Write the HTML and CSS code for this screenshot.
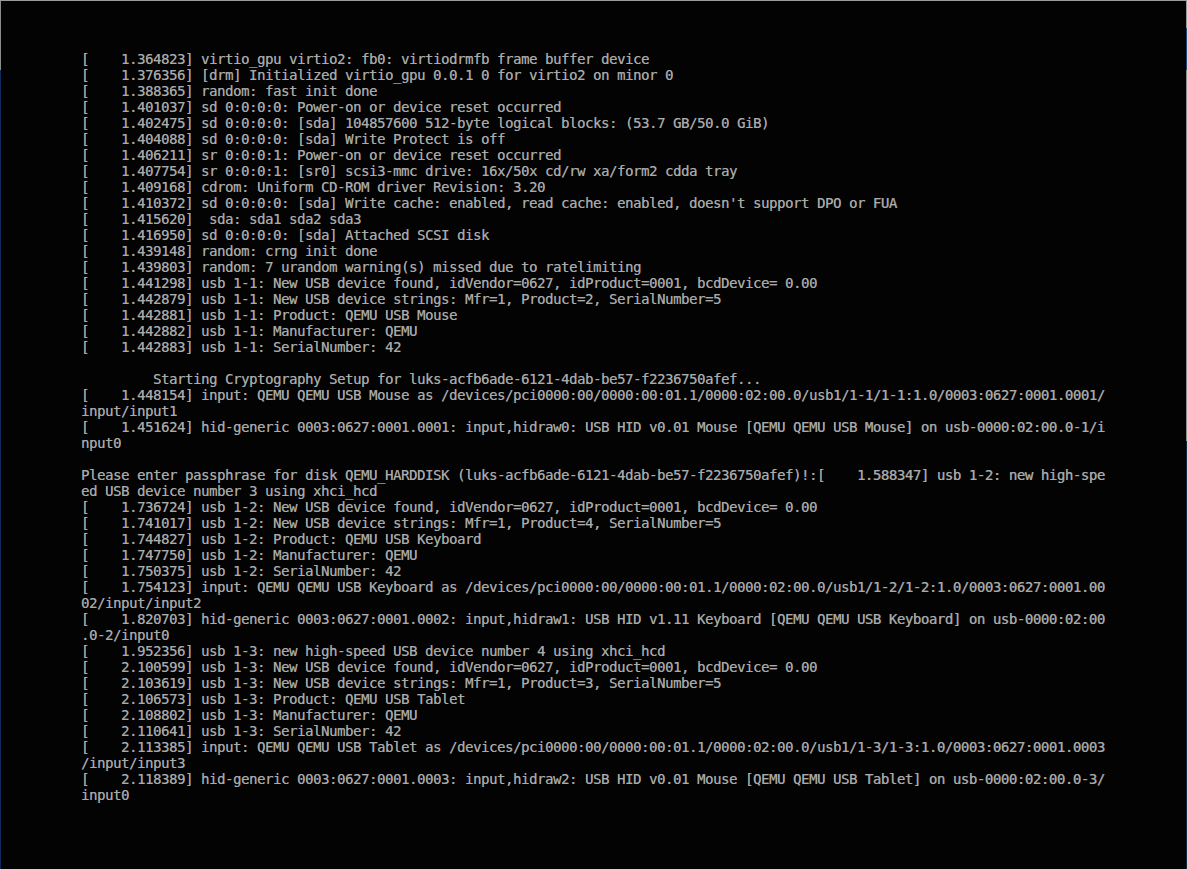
FILE: index.html
```html
<!DOCTYPE html>
<html lang="en">
<head>
<meta charset="utf-8">
<title>Console</title>
<link rel="stylesheet" href="styles.css">
</head>
<body>
<main class="screen">
<pre class="console">[    1.364823] virtio_gpu virtio2: fb0: virtiodrmfb frame buffer device
[    1.376356] [drm] Initialized virtio_gpu 0.0.1 0 for virtio2 on minor 0
[    1.388365] random: fast init done
[    1.401037] sd 0:0:0:0: Power-on or device reset occurred
[    1.402475] sd 0:0:0:0: [sda] 104857600 512-byte logical blocks: (53.7 GB/50.0 GiB)
[    1.404088] sd 0:0:0:0: [sda] Write Protect is off
[    1.406211] sr 0:0:0:1: Power-on or device reset occurred
[    1.407754] sr 0:0:0:1: [sr0] scsi3-mmc drive: 16x/50x cd/rw xa/form2 cdda tray
[    1.409168] cdrom: Uniform CD-ROM driver Revision: 3.20
[    1.410372] sd 0:0:0:0: [sda] Write cache: enabled, read cache: enabled, doesn't support DPO or FUA
[    1.415620]  sda: sda1 sda2 sda3
[    1.416950] sd 0:0:0:0: [sda] Attached SCSI disk
[    1.439148] random: crng init done
[    1.439803] random: 7 urandom warning(s) missed due to ratelimiting
[    1.441298] usb 1-1: New USB device found, idVendor=0627, idProduct=0001, bcdDevice= 0.00
[    1.442879] usb 1-1: New USB device strings: Mfr=1, Product=2, SerialNumber=5
[    1.442881] usb 1-1: Product: QEMU USB Mouse
[    1.442882] usb 1-1: Manufacturer: QEMU
[    1.442883] usb 1-1: SerialNumber: 42

         Starting Cryptography Setup for luks-acfb6ade-6121-4dab-be57-f2236750afef...
[    1.448154] input: QEMU QEMU USB Mouse as /devices/pci0000:00/0000:00:01.1/0000:02:00.0/usb1/1-1/1-1:1.0/0003:0627:0001.0001/
input/input1
[    1.451624] hid-generic 0003:0627:0001.0001: input,hidraw0: USB HID v0.01 Mouse [QEMU QEMU USB Mouse] on usb-0000:02:00.0-1/i
nput0

Please enter passphrase for disk QEMU_HARDDISK (luks-acfb6ade-6121-4dab-be57-f2236750afef)!:[    1.588347] usb 1-2: new high-spe
ed USB device number 3 using xhci_hcd
[    1.736724] usb 1-2: New USB device found, idVendor=0627, idProduct=0001, bcdDevice= 0.00
[    1.741017] usb 1-2: New USB device strings: Mfr=1, Product=4, SerialNumber=5
[    1.744827] usb 1-2: Product: QEMU USB Keyboard
[    1.747750] usb 1-2: Manufacturer: QEMU
[    1.750375] usb 1-2: SerialNumber: 42
[    1.754123] input: QEMU QEMU USB Keyboard as /devices/pci0000:00/0000:00:01.1/0000:02:00.0/usb1/1-2/1-2:1.0/0003:0627:0001.00
02/input/input2
[    1.820703] hid-generic 0003:0627:0001.0002: input,hidraw1: USB HID v1.11 Keyboard [QEMU QEMU USB Keyboard] on usb-0000:02:00
.0-2/input0
[    1.952356] usb 1-3: new high-speed USB device number 4 using xhci_hcd
[    2.100599] usb 1-3: New USB device found, idVendor=0627, idProduct=0001, bcdDevice= 0.00
[    2.103619] usb 1-3: New USB device strings: Mfr=1, Product=3, SerialNumber=5
[    2.106573] usb 1-3: Product: QEMU USB Tablet
[    2.108802] usb 1-3: Manufacturer: QEMU
[    2.110641] usb 1-3: SerialNumber: 42
[    2.113385] input: QEMU QEMU USB Tablet as /devices/pci0000:00/0000:00:01.1/0000:02:00.0/usb1/1-3/1-3:1.0/0003:0627:0001.0003
/input/input3
[    2.118389] hid-generic 0003:0627:0001.0003: input,hidraw2: USB HID v0.01 Mouse [QEMU QEMU USB Tablet] on usb-0000:02:00.0-3/
input0</pre>
</main>
</body>
</html>
```

FILE: styles.css
```css
html, body {
  margin: 0;
  padding: 0;
  background: #030303;
}

.screen {
  height: 869px;
  box-sizing: border-box;
  padding: 51px 0 0 81px;
  overflow: hidden;
  background:
    linear-gradient(#9b9b9b, #9b9b9b) left top / 100% 1px no-repeat,
    linear-gradient(to bottom, #8c8c8c 0 70px, #0d2a5c 70px) left top / 1px 100% no-repeat,
    linear-gradient(to bottom, #9a9a9a 0 28px, #1d4a7a 28px 70px, #8d8d8d 70px 441px, #0b2a3c 441px) right top / 1px 100% no-repeat,
    #030303;
}

.console {
  margin: 0;
  width: 1024px;
  font-family: "DejaVu Sans Mono", monospace;
  font-size: 14px;
  letter-spacing: -0.43px;
  line-height: 16px;
  color: #aaaaaa;
  text-shadow: 0.35px 0 0 rgba(170, 170, 170, 0.7);
  white-space: pre;
}
```
